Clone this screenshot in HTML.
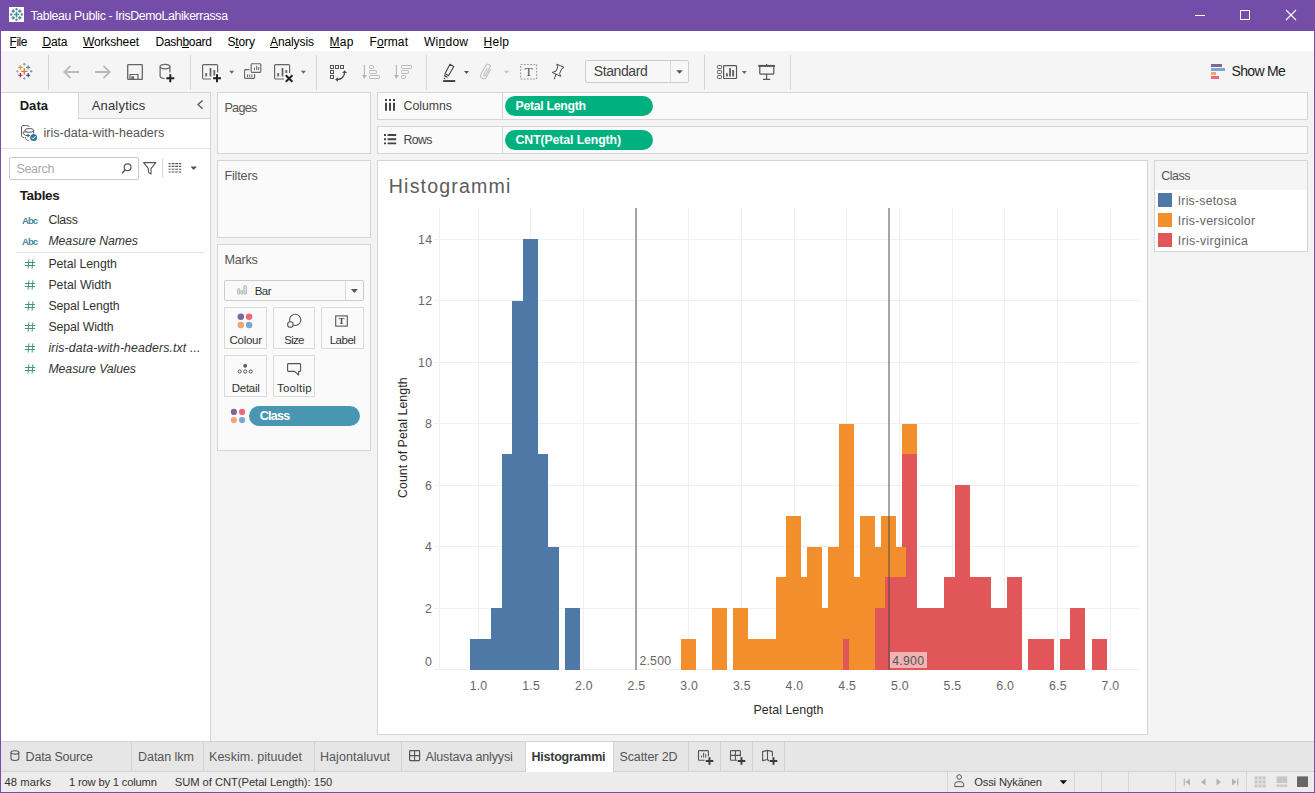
<!DOCTYPE html>
<html lang="en"><head><meta charset="utf-8"><title>Tableau Public - IrisDemoLahikerrassa</title>
<style>
html,body{margin:0;padding:0;}
body{width:1315px;height:793px;position:relative;overflow:hidden;background:#f5f5f5;font-family:"Liberation Sans", sans-serif;}
.b{position:absolute;}
.t{position:absolute;white-space:nowrap;display:block;}
.ic{position:absolute;overflow:visible;}
u{text-decoration:underline;text-underline-offset:1px;}
</style></head><body>
<div class="b" style="left:0px;top:0px;width:1315px;height:793px;background:#744da9;"></div>
<div class="b" style="left:1px;top:31px;width:1313px;height:761px;background:#f3f3f3;"></div>
<div class="b" style="left:1px;top:31px;width:1313px;height:20px;background:#fff;"></div>
<div class="b" style="left:1px;top:51px;width:1313px;height:41px;background:#f5f5f5;"></div>
<div class="b" style="left:48px;top:55px;width:1px;height:35px;background:#d6d6d6;"></div>
<div class="b" style="left:190px;top:55px;width:1px;height:35px;background:#d6d6d6;"></div>
<div class="b" style="left:316px;top:55px;width:1px;height:35px;background:#d6d6d6;"></div>
<div class="b" style="left:426px;top:55px;width:1px;height:35px;background:#d6d6d6;"></div>
<div class="b" style="left:704px;top:55px;width:1px;height:35px;background:#d6d6d6;"></div>
<div class="b" style="left:790px;top:55px;width:1px;height:35px;background:#d6d6d6;"></div>
<div class="b" style="left:585px;top:60px;width:104px;height:23px;background:#f7f7f7;border:1px solid #cdcdcd;box-sizing:border-box;border-radius:2px;"></div>
<div class="b" style="left:670px;top:61px;width:1px;height:21px;background:#d8d8d8;"></div>
<div class="b" style="left:1px;top:92px;width:209px;height:650px;background:#fff;"></div>
<div class="b" style="left:1px;top:92px;width:210px;height:1px;background:#d5d5d5;"></div>
<div class="b" style="left:210px;top:92px;width:1px;height:650px;background:#d5d5d5;"></div>
<div class="b" style="left:78px;top:93px;width:132px;height:26px;background:#f5f5f5;"></div>
<div class="b" style="left:78px;top:93px;width:1px;height:26px;background:#d5d5d5;"></div>
<div class="b" style="left:78px;top:118px;width:132px;height:1px;background:#d5d5d5;"></div>
<div class="b" style="left:1px;top:148px;width:209px;height:1px;background:#e3e3e3;"></div>
<div class="b" style="left:9px;top:157px;width:130px;height:23px;background:#fff;border:1px solid #c9c9c9;box-sizing:border-box;border-radius:2px;"></div>
<div class="b" style="left:162px;top:159px;width:1px;height:18px;background:#d8d8d8;"></div>
<div class="b" style="left:16px;top:252px;width:188px;height:1px;background:#e3e3e3;"></div>
<div class="b" style="left:217px;top:92px;width:154px;height:62px;background:#fafafa;border:1px solid #d5d5d5;box-sizing:border-box;"></div>
<div class="b" style="left:217px;top:160px;width:154px;height:78px;background:#fafafa;border:1px solid #d5d5d5;box-sizing:border-box;"></div>
<div class="b" style="left:217px;top:244px;width:154px;height:207px;background:#fafafa;border:1px solid #d5d5d5;box-sizing:border-box;"></div>
<div class="b" style="left:224px;top:280px;width:140px;height:21px;background:#fafafa;border:1px solid #cdcdcd;box-sizing:border-box;border-radius:2px;"></div>
<div class="b" style="left:345px;top:281px;width:1px;height:19px;background:#d8d8d8;"></div>
<div class="b" style="left:224px;top:307px;width:43px;height:42px;background:#fafafa;border:1px solid #dadada;box-sizing:border-box;"></div>
<div class="b" style="left:273px;top:307px;width:42px;height:42px;background:#fafafa;border:1px solid #dadada;box-sizing:border-box;"></div>
<div class="b" style="left:321px;top:307px;width:43px;height:42px;background:#fafafa;border:1px solid #dadada;box-sizing:border-box;"></div>
<div class="b" style="left:224px;top:355px;width:43px;height:42px;background:#fafafa;border:1px solid #dadada;box-sizing:border-box;"></div>
<div class="b" style="left:273px;top:355px;width:42px;height:42px;background:#fafafa;border:1px solid #dadada;box-sizing:border-box;"></div>
<div class="b" style="left:249px;top:406px;width:111px;height:20px;background:#4996b2;border-radius:10px;"></div>
<div class="b" style="left:377px;top:92px;width:931px;height:28px;background:#fafafa;border:1px solid #d5d5d5;box-sizing:border-box;"></div>
<div class="b" style="left:502px;top:93px;width:1px;height:26px;background:#d5d5d5;"></div>
<div class="b" style="left:377px;top:126px;width:931px;height:28px;background:#fafafa;border:1px solid #d5d5d5;box-sizing:border-box;"></div>
<div class="b" style="left:502px;top:127px;width:1px;height:26px;background:#d5d5d5;"></div>
<div class="b" style="left:505px;top:96px;width:148px;height:20px;background:#00b180;border-radius:10px;"></div>
<div class="b" style="left:505px;top:130px;width:148px;height:20px;background:#00b180;border-radius:10px;"></div>
<div class="b" style="left:377px;top:160px;width:771px;height:575px;background:#fff;border:1px solid #d5d5d5;box-sizing:border-box;"></div>
<div class="b" style="left:1154px;top:160px;width:154px;height:92px;background:#fff;border:1px solid #d5d5d5;box-sizing:border-box;"></div>
<div class="b" style="left:1155px;top:161px;width:152px;height:29px;background:#f5f5f5;"></div>
<div class="b" style="left:1158px;top:193px;width:14px;height:14px;background:#4e79a7;"></div>
<div class="b" style="left:1158px;top:213px;width:14px;height:14px;background:#f28e2b;"></div>
<div class="b" style="left:1158px;top:233px;width:14px;height:14px;background:#e15759;"></div>
<div class="b" style="left:1px;top:741px;width:1313px;height:31px;background:#e6e6e6;"></div>
<div class="b" style="left:1px;top:741px;width:1313px;height:1px;background:#d2d2d2;"></div>
<div class="b" style="left:1px;top:771px;width:1313px;height:21px;background:#ececec;"></div>
<div class="b" style="left:1px;top:771px;width:1313px;height:1px;background:#d2d2d2;"></div>
<div class="b" style="left:131px;top:742px;width:1px;height:29px;background:#d2d2d2;"></div>
<div class="b" style="left:203px;top:742px;width:1px;height:29px;background:#d2d2d2;"></div>
<div class="b" style="left:314px;top:742px;width:1px;height:29px;background:#d2d2d2;"></div>
<div class="b" style="left:401px;top:742px;width:1px;height:29px;background:#d2d2d2;"></div>
<div class="b" style="left:525px;top:742px;width:1px;height:29px;background:#d2d2d2;"></div>
<div class="b" style="left:613px;top:742px;width:1px;height:29px;background:#d2d2d2;"></div>
<div class="b" style="left:688px;top:742px;width:1px;height:29px;background:#d2d2d2;"></div>
<div class="b" style="left:720px;top:742px;width:1px;height:29px;background:#d2d2d2;"></div>
<div class="b" style="left:752px;top:742px;width:1px;height:29px;background:#d2d2d2;"></div>
<div class="b" style="left:784px;top:742px;width:1px;height:29px;background:#d2d2d2;"></div>
<div class="b" style="left:526px;top:742px;width:87px;height:30px;background:#fff;"></div>
<div class="b" style="left:947px;top:772px;width:1px;height:20px;background:#d6d6d6;"></div>
<div class="b" style="left:1074px;top:772px;width:1px;height:20px;background:#d6d6d6;"></div>
<div class="b" style="left:1101px;top:772px;width:1px;height:20px;background:#d6d6d6;"></div>
<div class="b" style="left:1128px;top:772px;width:1px;height:20px;background:#d6d6d6;"></div>
<div class="b" style="left:1175px;top:772px;width:1px;height:20px;background:#d6d6d6;"></div>
<div class="b" style="left:1246px;top:772px;width:1px;height:20px;background:#d6d6d6;"></div>
<svg class="chart" style="position:absolute;left:378px;top:161px" width="769" height="573" viewBox="378 161 769 573" shape-rendering="crispEdges">
<line x1="478.5" y1="208" x2="478.5" y2="670" stroke="#f0f0f0" stroke-width="1"/>
<line x1="530.5" y1="208" x2="530.5" y2="670" stroke="#f0f0f0" stroke-width="1"/>
<line x1="583.5" y1="208" x2="583.5" y2="670" stroke="#f0f0f0" stroke-width="1"/>
<line x1="636.5" y1="208" x2="636.5" y2="670" stroke="#f0f0f0" stroke-width="1"/>
<line x1="688.5" y1="208" x2="688.5" y2="670" stroke="#f0f0f0" stroke-width="1"/>
<line x1="741.5" y1="208" x2="741.5" y2="670" stroke="#f0f0f0" stroke-width="1"/>
<line x1="794.5" y1="208" x2="794.5" y2="670" stroke="#f0f0f0" stroke-width="1"/>
<line x1="846.5" y1="208" x2="846.5" y2="670" stroke="#f0f0f0" stroke-width="1"/>
<line x1="899.5" y1="208" x2="899.5" y2="670" stroke="#f0f0f0" stroke-width="1"/>
<line x1="952.5" y1="208" x2="952.5" y2="670" stroke="#f0f0f0" stroke-width="1"/>
<line x1="1004.5" y1="208" x2="1004.5" y2="670" stroke="#f0f0f0" stroke-width="1"/>
<line x1="1057.5" y1="208" x2="1057.5" y2="670" stroke="#f0f0f0" stroke-width="1"/>
<line x1="1110.5" y1="208" x2="1110.5" y2="670" stroke="#f0f0f0" stroke-width="1"/>
<line x1="439.5" y1="208" x2="439.5" y2="670" stroke="#f0f0f0" stroke-width="1"/>
<line x1="434.0" y1="669.5" x2="1140" y2="669.5" stroke="#f0f0f0" stroke-width="1"/>
<line x1="434.0" y1="608.5" x2="1140" y2="608.5" stroke="#f0f0f0" stroke-width="1"/>
<line x1="434.0" y1="546.5" x2="1140" y2="546.5" stroke="#f0f0f0" stroke-width="1"/>
<line x1="434.0" y1="485.5" x2="1140" y2="485.5" stroke="#f0f0f0" stroke-width="1"/>
<line x1="434.0" y1="423.5" x2="1140" y2="423.5" stroke="#f0f0f0" stroke-width="1"/>
<line x1="434.0" y1="362.5" x2="1140" y2="362.5" stroke="#f0f0f0" stroke-width="1"/>
<line x1="434.0" y1="300.5" x2="1140" y2="300.5" stroke="#f0f0f0" stroke-width="1"/>
<line x1="434.0" y1="239.5" x2="1140" y2="239.5" stroke="#f0f0f0" stroke-width="1"/>
<rect x="470" y="639" width="15" height="31" fill="#4e79a7"/>
<rect x="481" y="639" width="15" height="31" fill="#4e79a7"/>
<rect x="491" y="608" width="15" height="62" fill="#4e79a7"/>
<rect x="502" y="454" width="15" height="216" fill="#4e79a7"/>
<rect x="512" y="301" width="15" height="369" fill="#4e79a7"/>
<rect x="523" y="239" width="15" height="431" fill="#4e79a7"/>
<rect x="533" y="454" width="15" height="216" fill="#4e79a7"/>
<rect x="544" y="547" width="15" height="123" fill="#4e79a7"/>
<rect x="565" y="608" width="15" height="62" fill="#4e79a7"/>
<rect x="839" y="639" width="15" height="31" fill="#e15759"/>
<rect x="870" y="608" width="15" height="62" fill="#e15759"/>
<rect x="881" y="577" width="15" height="93" fill="#e15759"/>
<rect x="891" y="577" width="15" height="93" fill="#e15759"/>
<rect x="902" y="454" width="15" height="216" fill="#e15759"/>
<rect x="912" y="608" width="15" height="62" fill="#e15759"/>
<rect x="923" y="608" width="15" height="62" fill="#e15759"/>
<rect x="934" y="608" width="15" height="62" fill="#e15759"/>
<rect x="944" y="577" width="15" height="93" fill="#e15759"/>
<rect x="955" y="485" width="15" height="185" fill="#e15759"/>
<rect x="965" y="577" width="15" height="93" fill="#e15759"/>
<rect x="976" y="577" width="15" height="93" fill="#e15759"/>
<rect x="986" y="608" width="15" height="62" fill="#e15759"/>
<rect x="997" y="608" width="15" height="62" fill="#e15759"/>
<rect x="1007" y="577" width="15" height="93" fill="#e15759"/>
<rect x="1028" y="639" width="15" height="31" fill="#e15759"/>
<rect x="1039" y="639" width="15" height="31" fill="#e15759"/>
<rect x="1060" y="639" width="15" height="31" fill="#e15759"/>
<rect x="1070" y="608" width="15" height="62" fill="#e15759"/>
<rect x="1092" y="639" width="15" height="31" fill="#e15759"/>
<rect x="681" y="639" width="15" height="31" fill="#f28e2b"/>
<rect x="712" y="608" width="15" height="62" fill="#f28e2b"/>
<rect x="733" y="608" width="15" height="62" fill="#f28e2b"/>
<rect x="744" y="639" width="15" height="31" fill="#f28e2b"/>
<rect x="754" y="639" width="15" height="31" fill="#f28e2b"/>
<rect x="765" y="639" width="15" height="31" fill="#f28e2b"/>
<rect x="776" y="577" width="15" height="93" fill="#f28e2b"/>
<rect x="786" y="516" width="15" height="154" fill="#f28e2b"/>
<rect x="797" y="577" width="15" height="93" fill="#f28e2b"/>
<rect x="807" y="547" width="15" height="123" fill="#f28e2b"/>
<rect x="818" y="608" width="15" height="62" fill="#f28e2b"/>
<rect x="828" y="547" width="15" height="123" fill="#f28e2b"/>
<rect x="839" y="424" width="15" height="215" fill="#f28e2b"/>
<rect x="849" y="577" width="15" height="93" fill="#f28e2b"/>
<rect x="860" y="516" width="15" height="154" fill="#f28e2b"/>
<rect x="870" y="547" width="15" height="61" fill="#f28e2b"/>
<rect x="881" y="516" width="15" height="61" fill="#f28e2b"/>
<rect x="891" y="547" width="15" height="30" fill="#f28e2b"/>
<rect x="902" y="424" width="15" height="30" fill="#f28e2b"/>
<rect x="635" y="208" width="2" height="462" fill="#484848" fill-opacity="0.48"/>
<rect x="888" y="208" width="2" height="462" fill="#484848" fill-opacity="0.48"/>
</svg>
<div class="b" style="left:890px;top:652px;width:37px;height:16px;background:rgba(255,255,255,0.55);"></div>
<div class="b" style="left:10px;top:47px;width:6px;height:1px;background:#000;"></div>
<div class="b" style="left:42px;top:47px;width:9px;height:1px;background:#000;"></div>
<div class="b" style="left:83px;top:47px;width:11px;height:1px;background:#000;"></div>
<div class="b" style="left:182px;top:47px;width:7px;height:1px;background:#000;"></div>
<div class="b" style="left:235px;top:47px;width:4px;height:1px;background:#000;"></div>
<div class="b" style="left:270px;top:47px;width:8px;height:1px;background:#000;"></div>
<div class="b" style="left:330px;top:47px;width:10px;height:1px;background:#000;"></div>
<div class="b" style="left:377px;top:47px;width:7px;height:1px;background:#000;"></div>
<div class="b" style="left:439px;top:47px;width:6px;height:1px;background:#000;"></div>
<div class="b" style="left:484px;top:47px;width:8px;height:1px;background:#000;"></div>
<svg class="ic" style="left:0;top:0" width="1315" height="793" viewBox="0 0 1315 793" fill="none">
<path d="M1195 15.5 h10" stroke="#fff" stroke-width="1"/>
<rect x="1240.5" y="10.5" width="9" height="9" stroke="#fff" stroke-width="1"/>
<path d="M1286 10 l10 10 M1296 10 l-10 10" stroke="#fff" stroke-width="1.1"/>
<rect x="9" y="7" width="15" height="15" fill="#fff"/>
<path d="M13.8 14.5 h5.4 M16.5 11.8 v5.4" stroke="#4e86a4" stroke-width="1.5" fill="none"/>
<path d="M11.6 11.2 h3.2 M13.2 9.6 v3.2" stroke="#4e86a4" stroke-width="1.4" fill="none"/>
<path d="M18.2 11.2 h3.2 M19.8 9.6 v3.2" stroke="#4e86a4" stroke-width="1.4" fill="none"/>
<path d="M11.6 17.8 h3.2 M13.2 16.2 v3.2" stroke="#4e86a4" stroke-width="1.4" fill="none"/>
<path d="M18.2 17.8 h3.2 M19.8 16.2 v3.2" stroke="#4e86a4" stroke-width="1.4" fill="none"/>
<path d="M15.3 9.2 h2.4 M16.5 7.999999999999999 v2.4" stroke="#4e86a4" stroke-width="1.3" fill="none"/>
<path d="M15.3 19.8 h2.4 M16.5 18.6 v2.4" stroke="#4e86a4" stroke-width="1.3" fill="none"/>
<path d="M10.0 14.5 h2.4 M11.2 13.3 v2.4" stroke="#4e86a4" stroke-width="1.3" fill="none"/>
<path d="M20.6 14.5 h2.4 M21.8 13.3 v2.4" stroke="#4e86a4" stroke-width="1.3" fill="none"/>
<path d="M21.2 71.3 h6.2 M24.3 68.2 v6.2" stroke="#e8762d" stroke-width="1.3" fill="none"/>
<path d="M18.3 67.39999999999999 h4.2 M20.400000000000002 65.3 v4.2" stroke="#eb9129" stroke-width="1.1" fill="none"/>
<path d="M26.099999999999998 67.39999999999999 h4.2 M28.2 65.3 v4.2" stroke="#5a8ca2" stroke-width="1.1" fill="none"/>
<path d="M18.3 75.2 h4.2 M20.400000000000002 73.10000000000001 v4.2" stroke="#c72037" stroke-width="1.1" fill="none"/>
<path d="M26.099999999999998 75.2 h4.2 M28.2 73.10000000000001 v4.2" stroke="#1f457e" stroke-width="1.1" fill="none"/>
<path d="M23.0 64.2 h2.6 M24.3 62.900000000000006 v2.6" stroke="#7199a6" stroke-width="1" fill="none"/>
<path d="M23.0 78.39999999999999 h2.6 M24.3 77.1 v2.6" stroke="#8f9bb3" stroke-width="1" fill="none"/>
<path d="M16.099999999999998 71.3 h2.6 M17.4 70.0 v2.6" stroke="#8fb0c0" stroke-width="1" fill="none"/>
<path d="M29.900000000000002 71.3 h2.6 M31.200000000000003 70.0 v2.6" stroke="#7199a6" stroke-width="1" fill="none"/>
<path d="M79 72 H64.5 M70.5 65.8 L64.3 72 L70.5 78.2" stroke="#b9b9b9" stroke-width="1.8"/>
<path d="M95 72 H109.5 M103.5 65.8 L109.7 72 L103.5 78.2" stroke="#b9b9b9" stroke-width="1.8"/>
<rect x="127.7" y="64.7" width="14.6" height="14.6" rx="0.4" stroke="#666" stroke-width="1.3"/>
<path d="M130 79 v-4.5 h8 v4.5" stroke="#666" stroke-width="1.2"/>
<rect x="131.3" y="76.3" width="2.8" height="3" fill="#666"/>
<ellipse cx="165" cy="66.6" rx="4.9" ry="2.3" stroke="#666" stroke-width="1.2"/>
<path d="M160.1 66.6 V76 C160.1 77.5 162 78.4 164.5 78.6 M169.9 66.6 V72.5" stroke="#666" stroke-width="1.2"/>
<path d="M166.3 78.2 h8 M170.3 74.2 v8" stroke="#222" stroke-width="2" fill="none"/>
<path d="M211 79 H203.6 a1 1 0 0 1 -1 -1 V65.6 a1 1 0 0 1 1 -1 H216.6 a1 1 0 0 1 1 1 V72.5" stroke="#666" stroke-width="1.2"/>
<path d="M206.2 73 v3.5 M210.5 68 v8.5 M214.3 70 v5.4" stroke="#666" stroke-width="1.8"/>
<path d="M213 78.2 h8 M217 74.2 v8" stroke="#222" stroke-width="2" fill="none"/>
<path d="M229.2 70.7 h5 l-2.5 3 z" fill="#666"/>
<rect x="251.2" y="63.8" width="9.6" height="8.6" rx="0.8" stroke="#666" stroke-width="1.1" fill="#f5f5f5"/>
<path d="M254.5 70 v-2.5 M256.7 70 v-4.2 M258.7 70 v-3" stroke="#666" stroke-width="1"/>
<path d="M249.5 69.6 H245.4 a0.8 0.8 0 0 0 -0.8 0.8 V77.6 a0.8 0.8 0 0 0 0.8 0.8 H253.8 a0.8 0.8 0 0 0 0.8 -0.8 V74" stroke="#666" stroke-width="1.1"/>
<path d="M247.5 77 v-2.6 M249.7 77 v-2.6 M251.9 77 v-2.6" stroke="#666" stroke-width="1"/>
<path d="M284 79 H275.6 a1 1 0 0 1 -1 -1 V65.6 a1 1 0 0 1 1 -1 H288.6 a1 1 0 0 1 1 1 V73" stroke="#666" stroke-width="1.2"/>
<path d="M278.2 73 v3.5 M282.5 68 v8.5 M286.3 70 v3" stroke="#666" stroke-width="1.8"/>
<path d="M285.8 75.2 l6.6 6.6 M292.4 75.2 l-6.6 6.6" stroke="#222" stroke-width="2"/>
<path d="M300.9 70.7 h5 l-2.5 3 z" fill="#666"/>
<rect x="330.5" y="65.5" width="3" height="3" stroke="#555" stroke-width="1" shape-rendering="crispEdges"/>
<rect x="335.5" y="65.5" width="3" height="3" stroke="#555" stroke-width="1" shape-rendering="crispEdges"/>
<rect x="340.5" y="65.5" width="3" height="3" stroke="#555" stroke-width="1" shape-rendering="crispEdges"/>
<rect x="330.5" y="70.5" width="3" height="3" stroke="#555" stroke-width="1" shape-rendering="crispEdges"/>
<rect x="330.5" y="75.5" width="3" height="3" stroke="#555" stroke-width="1" shape-rendering="crispEdges"/>
<path d="M344.6 72.6 A7 7 0 0 1 337.6 79.5" stroke="#4a4a4a" stroke-width="1.3"/>
<path d="M344.6 70.2 L347 73 L342.2 73 Z M335.1 79.5 L337.9 77.2 L337.9 81.8 Z" fill="#4a4a4a"/>
<path d="M364.4 65 V76" stroke="#b9b9b9" stroke-width="1.2"/>
<path d="M361.79999999999995 75.1 h5.2 l-2.6 4 z" fill="#b9b9b9"/>
<rect x="369.5" y="65.5" width="4" height="3" rx="0.7" stroke="#b9b9b9" stroke-width="1"/>
<rect x="369.5" y="70.5" width="7" height="3" rx="0.7" stroke="#b9b9b9" stroke-width="1"/>
<rect x="369.5" y="75.5" width="10" height="3" rx="0.7" stroke="#b9b9b9" stroke-width="1"/>
<path d="M396.4 65 V76" stroke="#b9b9b9" stroke-width="1.2"/>
<path d="M393.79999999999995 75.1 h5.2 l-2.6 4 z" fill="#b9b9b9"/>
<rect x="401.5" y="65.5" width="10" height="3" rx="0.7" stroke="#b9b9b9" stroke-width="1"/>
<rect x="401.5" y="70.5" width="7" height="3" rx="0.7" stroke="#b9b9b9" stroke-width="1"/>
<rect x="401.5" y="75.5" width="4" height="3" rx="0.7" stroke="#b9b9b9" stroke-width="1"/>
<rect x="443.2" y="80.1" width="12" height="1.9" fill="#3c3c3c"/>
<path d="M450 64.3 L453.8 66.4 L448.5 75.7 L445.1 73.5 Z" stroke="#444" stroke-width="1.1" stroke-linejoin="round"/>
<path d="M444.4 75 L447.4 77.2 L444.9 76.6 Z" stroke="#444" stroke-width="0.9" fill="#444" stroke-linejoin="round"/><circle cx="444.5" cy="78.5" r="0.75" fill="#444"/>
<path d="M464.0 71.0 h5 l-2.5 3 z" fill="#555"/>
<g transform="rotate(30 486 71.5) translate(486 71.5) scale(1.18) translate(-486 -71.5)"><path d="M488.6 68 V75.5 a2.6 2.6 0 0 1 -5.2 0 V67 a1.9 1.9 0 0 1 3.8 0 V74.6 a0.8 0.8 0 0 1 -1.6 0 V68.5" stroke="#c4c4c4" stroke-width="1"/></g>
<path d="M504.0 70.7 h5 l-2.5 3 z" fill="#c4c4c4"/>
<rect x="520.7" y="64.6" width="16" height="14.4" stroke="#8a8a8a" stroke-width="1" stroke-dasharray="1.7 1.5"/>
<path d="M557.2 64.3 L564.1 67.4 L561.9 68.5 L559.6 73.5 L560.7 76.4 L552.3 72.4 L556.2 71 L557.6 67.2 Z M556 74.3 L554.3 78.9" stroke="#4a4a4a" stroke-width="1" stroke-linejoin="round" stroke-linecap="round"/>
<path d="M676.3 70.2 h6.4 l-3.2 3.6 z" fill="#555"/>
<rect x="717.5" y="65.5" width="4" height="3" rx="0.8" stroke="#555" stroke-width="1"/>
<rect x="717.5" y="70.5" width="4" height="3" rx="0.8" stroke="#555" stroke-width="1"/>
<rect x="717.5" y="75.5" width="4" height="3" rx="0.8" stroke="#555" stroke-width="1"/>
<rect x="723.6" y="65.6" width="12.9" height="12.9" rx="0.8" stroke="#555" stroke-width="1.2"/>
<path d="M726.9 76.6 v-3.4 M730 76.6 v-8.5 M733.1 76.6 v-6.5" stroke="#555" stroke-width="1.7"/>
<path d="M741.8 71.0 h5 l-2.5 3 z" fill="#666"/>
<path d="M758.2 65.9 h16.8" stroke="#555" stroke-width="2"/><path d="M766.6 64 v1.5" stroke="#555" stroke-width="1.2"/>
<path d="M759.8 66.5 V73.2 a1 1 0 0 0 1 1 H772.8 a1 1 0 0 0 1 -1 V66.5 M766.6 74.2 V79.3 M763 79.4 h7.2" stroke="#555" stroke-width="1.2"/>
<rect x="1211" y="64" width="11" height="3" fill="#7b6a97"/><rect x="1211" y="68" width="14" height="3" fill="#7ca6cf"/><rect x="1211" y="72" width="5" height="3" fill="#f2a57b"/><rect x="1211" y="76" width="8" height="3" fill="#ea6a7a"/>
<path d="M202.6 100.5 L198 104.6 L202.6 108.7" stroke="#555" stroke-width="1.3"/>
<g stroke="#555" stroke-width="1">
<path d="M29.4 126.6 C28.4 125.5 22.4 124.6 21.5 127 V135.5 C21.6 136.8 22.6 137.4 24 137.7"/>
<ellipse cx="29.3" cy="130.4" rx="4.3" ry="1.9"/>
<path d="M25 130.4 V133 M33.6 130.4 V133.5 M25.3 137.2 C25.3 139.6 27 140.3 28.6 140.4"/>
<path d="M23.2 131.5 C23 134.5 24.5 135.6 28 135.6"/>
</g>
<path d="M27.5 133.6 l2.6 2 l-2.6 2 z" fill="#555"/>
<circle cx="33.6" cy="137.4" r="3.5" fill="#2a7b9c"/><path d="M31.8 137.5 l1.3 1.4 l2.4 -2.8" stroke="#fff" stroke-width="1"/>
<circle cx="127.6" cy="167.2" r="3.4" stroke="#555" stroke-width="1.2"/><path d="M125.2 169.8 L122 173.3" stroke="#555" stroke-width="1.3"/>
<path d="M143.6 162.6 H155.8 L151 168.6 V174 L148.4 172.4 V168.6 Z" stroke="#555" stroke-width="1.1" stroke-linejoin="round"/>
<path d="M168.6 163.6 h2 M171.6 163.6 h2.8 M175.2 163.6 h2.8 M178.8 163.6 h2.4" stroke="#555" stroke-width="1.1"/>
<path d="M168.6 166.4 h2 M171.6 166.4 h2.8 M175.2 166.4 h2.8 M178.8 166.4 h2.4" stroke="#555" stroke-width="1.1"/>
<path d="M168.6 169.2 h2 M171.6 169.2 h2.8 M175.2 169.2 h2.8 M178.8 169.2 h2.4" stroke="#555" stroke-width="1.1"/>
<path d="M168.6 172 h2 M171.6 172 h2.8 M175.2 172 h2.8 M178.8 172 h2.4" stroke="#555" stroke-width="1.1"/>
<path d="M190.39999999999998 166.39999999999998 h6.6 l-3.3 3.6 z" fill="#555"/>
<path d="M28.9 259.4 L28.1 268.6 M32.9 259.4 L32.1 268.6 M25 262.5 h10.2 M24.8 265.5 h10.2" stroke="#3f9c79" stroke-width="1"/>
<path d="M28.9 280.4 L28.1 289.6 M32.9 280.4 L32.1 289.6 M25 283.5 h10.2 M24.8 286.5 h10.2" stroke="#3f9c79" stroke-width="1"/>
<path d="M28.9 301.4 L28.1 310.6 M32.9 301.4 L32.1 310.6 M25 304.5 h10.2 M24.8 307.5 h10.2" stroke="#3f9c79" stroke-width="1"/>
<path d="M28.9 322.4 L28.1 331.6 M32.9 322.4 L32.1 331.6 M25 325.5 h10.2 M24.8 328.5 h10.2" stroke="#3f9c79" stroke-width="1"/>
<path d="M28.9 343.4 L28.1 352.6 M32.9 343.4 L32.1 352.6 M25 346.5 h10.2 M24.8 349.5 h10.2" stroke="#3f9c79" stroke-width="1"/>
<path d="M28.9 364.4 L28.1 373.6 M32.9 364.4 L32.1 373.6 M25 367.5 h10.2 M24.8 370.5 h10.2" stroke="#3f9c79" stroke-width="1"/>
<rect x="237.6" y="288.5" width="2.2" height="5.800000000000011" rx="1" stroke="#b4b4b4" stroke-width="1" fill="#e4e4e4"/>
<rect x="240.9" y="290.5" width="2" height="3.8000000000000114" rx="1" stroke="#b4b4b4" stroke-width="1" fill="#e4e4e4"/>
<rect x="244" y="285.6" width="2.3" height="8.699999999999989" rx="1" stroke="#b4b4b4" stroke-width="1" fill="#e4e4e4"/>
<path d="M350.9 289.1 h7 l-3.5 4 z" fill="#555"/>
<circle cx="240.79999999999998" cy="316.75" r="3.25" fill="#7b6a97"/><circle cx="249.1" cy="316.75" r="3.25" fill="#ea6a7a"/><circle cx="240.79999999999998" cy="325.04999999999995" r="3.25" fill="#f2a57b"/><circle cx="249.1" cy="325.04999999999995" r="3.25" fill="#7ca6cf"/>
<circle cx="233.9" cy="411.9" r="3.1" fill="#7b6a97"/><circle cx="242.1" cy="411.9" r="3.1" fill="#ea6a7a"/><circle cx="233.9" cy="420.1" r="3.1" fill="#f2a57b"/><circle cx="242.1" cy="420.1" r="3.1" fill="#7ca6cf"/>
<circle cx="295.2" cy="319.9" r="5.6" stroke="#555" stroke-width="1.1"/><circle cx="290.4" cy="324.5" r="2.8" stroke="#555" stroke-width="1.1" fill="#fafafa"/>
<rect x="335.7" y="315.9" width="11.6" height="10.2" stroke="#555" stroke-width="1.1"/>
<circle cx="245.2" cy="365.8" r="1.9" fill="#555"/>
<circle cx="239.7" cy="371.5" r="1.6" stroke="#555" stroke-width="1"/>
<circle cx="245.2" cy="371.5" r="1.6" stroke="#555" stroke-width="1"/>
<circle cx="250.7" cy="371.5" r="1.6" stroke="#555" stroke-width="1"/>
<path d="M288.4 363.6 H299.8 a0.8 0.8 0 0 1 0.8 0.8 V370.6 a0.8 0.8 0 0 1 -0.8 0.8 H298.6 V375 L294.6 371.4 H288.4 a0.8 0.8 0 0 1 -0.8 -0.8 V364.4 a0.8 0.8 0 0 1 0.8 -0.8 Z" stroke="#555" stroke-width="1.1" stroke-linejoin="round"/>
<path d="M386 99 v2 M386 102.8 v8" stroke="#444" stroke-width="2"/>
<path d="M390 99 v2 M390 102.8 v8" stroke="#444" stroke-width="2"/>
<path d="M394 99 v2 M394 102.8 v8" stroke="#444" stroke-width="2"/>
<path d="M384 135 h2 M387.6 135 h8.6" stroke="#444" stroke-width="1.9"/>
<path d="M384 139.3 h2 M387.6 139.3 h8.6" stroke="#444" stroke-width="1.9"/>
<path d="M384 143.4 h2 M387.6 143.4 h8.6" stroke="#444" stroke-width="1.9"/>
<ellipse cx="14.9" cy="752.4" rx="3.9" ry="1.7" stroke="#555" stroke-width="1.1"/><path d="M11 752.4 V758.6 C11 761.2 18.8 761.2 18.8 758.6 V752.4" stroke="#555" stroke-width="1.1"/>
<rect x="409.6" y="750.6" width="10" height="10" rx="0.8" stroke="#555" stroke-width="1.2"/><path d="M414.6 750.6 v10 M409.6 755.6 h10" stroke="#555" stroke-width="1.1"/>
<path d="M704.5 760.3 H699.3 a0.8 0.8 0 0 1 -0.8 -0.8 V751.4 a0.8 0.8 0 0 1 0.8 -0.8 H707.6 a0.8 0.8 0 0 1 0.8 0.8 V756.5" stroke="#555" stroke-width="1.1"/>
<path d="M701.5 757.5 v-2 M703.6 757.5 v-4.6 M705.7 757.5 v-3.4" stroke="#555" stroke-width="1"/>
<path d="M705.7 761 h7.6 M709.5 757.2 v7.6" stroke="#3a3a3a" stroke-width="1.9" fill="none"/>
<path d="M737 760.3 H731.3 a0.8 0.8 0 0 1 -0.8 -0.8 V751.4 a0.8 0.8 0 0 1 0.8 -0.8 H739.6 a0.8 0.8 0 0 1 0.8 0.8 V756.5 M735.4 750.6 V760.3 M730.5 755.4 H740.4" stroke="#555" stroke-width="1.1"/>
<path d="M737.7 761 h7.6 M741.5 757.2 v7.6" stroke="#3a3a3a" stroke-width="1.9" fill="none"/>
<path d="M769 761 L767.5 759.5 L762.6 760.6 V751.6 L767.5 750.4 L772.4 751.6 V756.5 M767.5 750.4 V759.5" stroke="#555" stroke-width="1.1" stroke-linejoin="round"/>
<path d="M769.7 761 h7.6 M773.5 757.2 v7.6" stroke="#3a3a3a" stroke-width="1.9" fill="none"/>
<circle cx="959.2" cy="777" r="2.3" stroke="#555" stroke-width="1"/><path d="M954.8 786.6 V784.4 a2.6 2.6 0 0 1 2.6 -2.6 h3.6 a2.6 2.6 0 0 1 2.6 2.6 V786.6 Z" stroke="#555" stroke-width="1" stroke-linejoin="round"/>
<path d="M1059.7 780.2 h7.4 l-3.7 4 z" fill="#111"/>
<path d="M1184.3 778.5 v7" stroke="#b4b4b4" stroke-width="1.2"/><path d="M1190 778.5 v7 l-4.6 -3.5 z" fill="#b4b4b4"/>
<path d="M1205.5 778.5 v7 l-4.6 -3.5 z" fill="#b4b4b4"/>
<path d="M1216.5 778.5 v7 l4.6 -3.5 z" fill="#b4b4b4"/>
<path d="M1237.7 778.5 v7" stroke="#b4b4b4" stroke-width="1.2"/><path d="M1232 778.5 v7 l4.6 -3.5 z" fill="#b4b4b4"/>
<rect x="1254.6" y="776.4" width="3" height="3" fill="#c6c6c6"/>
<rect x="1254.6" y="780.4" width="3" height="3" fill="#c6c6c6"/>
<rect x="1254.6" y="784.4" width="3" height="3" fill="#c6c6c6"/>
<rect x="1258.6" y="776.4" width="3" height="3" fill="#c6c6c6"/>
<rect x="1258.6" y="780.4" width="3" height="3" fill="#c6c6c6"/>
<rect x="1258.6" y="784.4" width="3" height="3" fill="#c6c6c6"/>
<rect x="1262.6" y="776.4" width="3" height="3" fill="#c6c6c6"/>
<rect x="1262.6" y="780.4" width="3" height="3" fill="#c6c6c6"/>
<rect x="1262.6" y="784.4" width="3" height="3" fill="#c6c6c6"/>
<rect x="1276.6" y="776.4" width="10.6" height="6.6" fill="#c6c6c6"/>
<rect x="1276.6" y="784.4" width="3" height="2.6" fill="#c6c6c6"/>
<rect x="1280.3999999999999" y="784.4" width="3" height="2.6" fill="#c6c6c6"/>
<rect x="1284.1999999999998" y="784.4" width="3" height="2.6" fill="#c6c6c6"/>
<rect x="1297" y="776.4" width="11" height="10.6" fill="#666"/>
</svg>
<span class="t" style="height:16px;line-height:16px;font-size:12.3px;color:#fff;letter-spacing:-0.362px;top:7.60px;left:30.5px;">Tableau Public - IrisDemoLahikerrassa</span>
<span class="t" style="height:16px;line-height:16px;font-size:12px;color:#000;letter-spacing:-0.453px;top:33.50px;left:9.5px;">File</span>
<span class="t" style="height:16px;line-height:16px;font-size:12px;color:#000;letter-spacing:-0.120px;top:33.50px;left:42.5px;">Data</span>
<span class="t" style="height:16px;line-height:16px;font-size:12px;color:#000;letter-spacing:-0.143px;top:33.50px;left:83px;">Worksheet</span>
<span class="t" style="height:16px;line-height:16px;font-size:12px;color:#000;letter-spacing:-0.279px;top:33.50px;left:155.5px;">Dashboard</span>
<span class="t" style="height:16px;line-height:16px;font-size:12px;color:#000;letter-spacing:-0.133px;top:33.50px;left:227.5px;">Story</span>
<span class="t" style="height:16px;line-height:16px;font-size:12px;color:#000;letter-spacing:-0.100px;top:33.50px;left:270px;">Analysis</span>
<span class="t" style="height:16px;line-height:16px;font-size:12px;color:#000;letter-spacing:0.320px;top:33.50px;left:329.5px;">Map</span>
<span class="t" style="height:16px;line-height:16px;font-size:12px;color:#000;letter-spacing:0.094px;top:33.50px;left:369.5px;">Format</span>
<span class="t" style="height:16px;line-height:16px;font-size:12px;color:#000;letter-spacing:0.259px;top:33.50px;left:424px;">Window</span>
<span class="t" style="height:16px;line-height:16px;font-size:12px;color:#000;letter-spacing:0.271px;top:33.50px;left:483.5px;">Help</span>
<span class="t" style="height:18px;line-height:18px;font-size:14px;color:#444;letter-spacing:-0.404px;top:61.80px;left:593.8px;">Standard</span>
<span class="t" style="height:18px;line-height:18px;font-size:14px;color:#222;letter-spacing:-0.693px;top:61.80px;left:1231.6px;">Show Me</span>
<span class="t" style="height:17px;line-height:17px;font-size:13px;color:#1a1a1a;font-weight:700;letter-spacing:0.038px;top:96.60px;left:19.7px;">Data</span>
<span class="t" style="height:17px;line-height:17px;font-size:13px;color:#333;letter-spacing:0.184px;top:96.60px;left:91.7px;">Analytics</span>
<span class="t" style="height:16px;line-height:16px;font-size:12.5px;color:#555;letter-spacing:0.029px;top:124.80px;left:43.5px;">iris-data-with-headers</span>
<span class="t" style="height:16px;line-height:16px;font-size:12.5px;color:#a9a9a9;letter-spacing:-0.322px;top:160.70px;left:16.4px;">Search</span>
<span class="t" style="height:17px;line-height:17px;font-size:13.5px;color:#1a1a1a;font-weight:700;letter-spacing:-0.353px;top:187.40px;left:19.7px;">Tables</span>
<span class="t" style="height:16px;line-height:16px;font-size:12.3px;color:#333;letter-spacing:-0.338px;top:211.80px;left:48.4px;">Class</span>
<span class="t" style="height:13px;line-height:13px;font-size:9.6px;color:#4a86a2;font-weight:700;letter-spacing:-1.112px;top:213.70px;left:22.1px;">Abc</span>
<span class="t" style="height:16px;line-height:16px;font-size:12.3px;color:#333;font-style:italic;letter-spacing:-0.052px;top:232.70px;left:48.4px;">Measure Names</span>
<span class="t" style="height:13px;line-height:13px;font-size:9.6px;color:#4a86a2;font-weight:700;letter-spacing:-1.112px;top:234.60px;left:22.1px;">Abc</span>
<span class="t" style="height:16px;line-height:16px;font-size:12.3px;color:#333;letter-spacing:-0.051px;top:255.80px;left:48.4px;">Petal Length</span>
<span class="t" style="height:16px;line-height:16px;font-size:12.3px;color:#333;letter-spacing:0.011px;top:276.80px;left:48.4px;">Petal Width</span>
<span class="t" style="height:16px;line-height:16px;font-size:12.3px;color:#333;letter-spacing:-0.108px;top:297.80px;left:48.4px;">Sepal Length</span>
<span class="t" style="height:16px;line-height:16px;font-size:12.3px;color:#333;letter-spacing:-0.101px;top:318.80px;left:48.4px;">Sepal Width</span>
<span class="t" style="height:16px;line-height:16px;font-size:12.3px;color:#333;font-style:italic;letter-spacing:0.128px;top:339.80px;left:48.4px;">iris-data-with-headers.txt ...</span>
<span class="t" style="height:16px;line-height:16px;font-size:12.3px;color:#333;font-style:italic;letter-spacing:-0.062px;top:360.80px;left:48.4px;">Measure Values</span>
<span class="t" style="height:16px;line-height:16px;font-size:12.6px;color:#555;letter-spacing:-0.680px;top:99.90px;left:224.4px;">Pages</span>
<span class="t" style="height:16px;line-height:16px;font-size:12.6px;color:#555;letter-spacing:-0.149px;top:168.00px;left:224.4px;">Filters</span>
<span class="t" style="height:16px;line-height:16px;font-size:12.6px;color:#555;letter-spacing:-0.224px;top:251.90px;left:224.4px;">Marks</span>
<span class="t" style="height:14px;line-height:14px;font-size:11.5px;color:#333;letter-spacing:-0.503px;top:283.60px;left:254.7px;">Bar</span>
<span class="t" style="height:14px;line-height:14px;font-size:11.5px;color:#333;letter-spacing:-0.258px;top:333.00px;left:229.5px;">Colour</span>
<span class="t" style="height:14px;line-height:14px;font-size:11.5px;color:#333;letter-spacing:-0.692px;top:333.00px;left:284.2px;">Size</span>
<span class="t" style="height:14px;line-height:14px;font-size:11.5px;color:#333;letter-spacing:-0.485px;top:333.00px;left:329.7px;">Label</span>
<span class="t" style="height:14px;line-height:14px;font-size:11.5px;color:#333;letter-spacing:-0.241px;top:381.00px;left:231.7px;">Detail</span>
<span class="t" style="height:14px;line-height:14px;font-size:11.5px;color:#333;letter-spacing:0.225px;top:381.00px;left:277.0px;">Tooltip</span>
<span class="t" style="height:16px;line-height:16px;font-size:12.6px;color:#fff;font-weight:700;letter-spacing:-0.802px;top:407.80px;left:259.8px;">Class</span>
<span class="t" style="height:16px;line-height:16px;font-size:12.3px;color:#444;letter-spacing:-0.039px;top:97.80px;left:403.6px;">Columns</span>
<span class="t" style="height:16px;line-height:16px;font-size:12.3px;color:#444;letter-spacing:-0.650px;top:131.80px;left:403.6px;">Rows</span>
<span class="t" style="height:16px;line-height:16px;font-size:12.3px;color:#fff;font-weight:700;letter-spacing:-0.300px;top:97.90px;left:515.6px;">Petal Length</span>
<span class="t" style="height:16px;line-height:16px;font-size:12.3px;color:#fff;font-weight:700;letter-spacing:-0.109px;top:131.90px;left:515.6px;">CNT(Petal Length)</span>
<span class="t" style="height:24px;line-height:24px;font-size:19.6px;color:#5c5c5c;letter-spacing:1.163px;top:174.00px;left:388.8px;">Histogrammi</span>
<span class="t" style="height:16px;line-height:16px;font-size:12.4px;color:#555;letter-spacing:-0.446px;top:167.80px;left:1161.2px;">Class</span>
<span class="t" style="height:16px;line-height:16px;font-size:12.3px;color:#666;letter-spacing:0.218px;top:193.00px;left:1177.7px;">Iris-setosa</span>
<span class="t" style="height:16px;line-height:16px;font-size:12.3px;color:#666;letter-spacing:0.306px;top:213.00px;left:1177.7px;">Iris-versicolor</span>
<span class="t" style="height:16px;line-height:16px;font-size:12.3px;color:#666;letter-spacing:0.354px;top:233.00px;left:1177.7px;">Iris-virginica</span>
<span class="t" style="height:16px;line-height:16px;font-size:12.3px;color:#666;top:654.00px;left:425.0px;">0</span>
<span class="t" style="height:16px;line-height:16px;font-size:12.3px;color:#666;top:600.80px;left:425.0px;">2</span>
<span class="t" style="height:16px;line-height:16px;font-size:12.3px;color:#666;top:539.30px;left:425.0px;">4</span>
<span class="t" style="height:16px;line-height:16px;font-size:12.3px;color:#666;top:477.80px;left:425.0px;">6</span>
<span class="t" style="height:16px;line-height:16px;font-size:12.3px;color:#666;top:416.30px;left:425.0px;">8</span>
<span class="t" style="height:16px;line-height:16px;font-size:12.3px;color:#666;letter-spacing:0.312px;top:354.80px;left:418.0px;">10</span>
<span class="t" style="height:16px;line-height:16px;font-size:12.3px;color:#666;letter-spacing:0.312px;top:293.30px;left:418.0px;">12</span>
<span class="t" style="height:16px;line-height:16px;font-size:12.3px;color:#666;letter-spacing:0.312px;top:231.80px;left:418.0px;">14</span>
<span class="t" style="height:16px;line-height:16px;font-size:12.3px;color:#666;letter-spacing:0.195px;top:678.20px;left:469.7px;">1.0</span>
<span class="t" style="height:16px;line-height:16px;font-size:12.3px;color:#666;letter-spacing:0.195px;top:678.20px;left:522.3px;">1.5</span>
<span class="t" style="height:16px;line-height:16px;font-size:12.3px;color:#666;letter-spacing:0.195px;top:678.20px;left:575.0px;">2.0</span>
<span class="t" style="height:16px;line-height:16px;font-size:12.3px;color:#666;letter-spacing:0.195px;top:678.20px;left:627.6px;">2.5</span>
<span class="t" style="height:16px;line-height:16px;font-size:12.3px;color:#666;letter-spacing:0.195px;top:678.20px;left:680.3px;">3.0</span>
<span class="t" style="height:16px;line-height:16px;font-size:12.3px;color:#666;letter-spacing:0.195px;top:678.20px;left:733.0px;">3.5</span>
<span class="t" style="height:16px;line-height:16px;font-size:12.3px;color:#666;letter-spacing:0.195px;top:678.20px;left:785.6px;">4.0</span>
<span class="t" style="height:16px;line-height:16px;font-size:12.3px;color:#666;letter-spacing:0.195px;top:678.20px;left:838.3px;">4.5</span>
<span class="t" style="height:16px;line-height:16px;font-size:12.3px;color:#666;letter-spacing:0.195px;top:678.20px;left:891.0px;">5.0</span>
<span class="t" style="height:16px;line-height:16px;font-size:12.3px;color:#666;letter-spacing:0.195px;top:678.20px;left:943.6px;">5.5</span>
<span class="t" style="height:16px;line-height:16px;font-size:12.3px;color:#666;letter-spacing:0.195px;top:678.20px;left:996.3px;">6.0</span>
<span class="t" style="height:16px;line-height:16px;font-size:12.3px;color:#666;letter-spacing:0.195px;top:678.20px;left:1049.0px;">6.5</span>
<span class="t" style="height:16px;line-height:16px;font-size:12.3px;color:#666;letter-spacing:0.195px;top:678.20px;left:1101.6px;">7.0</span>
<span class="t" style="height:16px;line-height:16px;font-size:12.4px;color:#2a2a2a;letter-spacing:0.037px;top:701.70px;left:753.5px;">Petal Length</span>
<span class="t" style="height:16px;line-height:16px;font-size:12.4px;color:#2a2a2a;letter-spacing:0.036px;left:395.30px;top:498.30px;transform-origin:0 0;transform:rotate(-90deg);">Count of Petal Length</span>
<span class="t" style="height:16px;line-height:16px;font-size:12.3px;color:#666;letter-spacing:0.230px;top:653.30px;left:639.4px;">2.500</span>
<span class="t" style="height:16px;line-height:16px;font-size:12.3px;color:#555;letter-spacing:0.280px;top:653.00px;left:892.2px;">4.900</span>
<span class="t" style="height:16px;line-height:16px;font-size:12.5px;color:#555;letter-spacing:-0.218px;top:748.80px;left:25.6px;">Data Source</span>
<span class="t" style="height:16px;line-height:16px;font-size:12.5px;color:#555;letter-spacing:-0.035px;top:748.80px;left:138px;">Datan lkm</span>
<span class="t" style="height:16px;line-height:16px;font-size:12.5px;color:#555;letter-spacing:0.039px;top:748.80px;left:209px;">Keskim. pituudet</span>
<span class="t" style="height:16px;line-height:16px;font-size:12.5px;color:#555;letter-spacing:0.045px;top:748.80px;left:320px;">Hajontaluvut</span>
<span class="t" style="height:16px;line-height:16px;font-size:12.5px;color:#555;letter-spacing:-0.155px;top:748.80px;left:425.5px;">Alustava anlyysi</span>
<span class="t" style="height:16px;line-height:16px;font-size:12.5px;color:#3a3a3a;font-weight:700;letter-spacing:-0.241px;top:748.60px;left:531.5px;">Histogrammi</span>
<span class="t" style="height:16px;line-height:16px;font-size:12.5px;color:#555;letter-spacing:-0.107px;top:748.80px;left:619.5px;">Scatter 2D</span>
<span class="t" style="height:14px;line-height:14px;font-size:11.2px;color:#333;letter-spacing:0.098px;top:774.90px;left:4.4px;">48 marks</span>
<span class="t" style="height:14px;line-height:14px;font-size:11.2px;color:#333;letter-spacing:-0.181px;top:774.90px;left:69px;">1 row by 1 column</span>
<span class="t" style="height:14px;line-height:14px;font-size:11.2px;color:#333;letter-spacing:-0.038px;top:774.90px;left:174.8px;">SUM of CNT(Petal Length): 150</span>
<span class="t" style="height:14px;line-height:14px;font-size:11.2px;color:#333;letter-spacing:-0.158px;top:774.90px;left:974.2px;">Ossi Nykänen</span>
<span class="t" style="height:17px;line-height:17px;font-size:13px;color:#555;top:63.40px;left:524.7px;font-family:'Liberation Serif',serif;">T</span>
<span class="t" style="height:12px;line-height:12px;font-size:8.8px;color:#444;font-weight:700;top:314.90px;left:338.6px;font-family:'Liberation Serif',serif;">T</span>
</body></html>
